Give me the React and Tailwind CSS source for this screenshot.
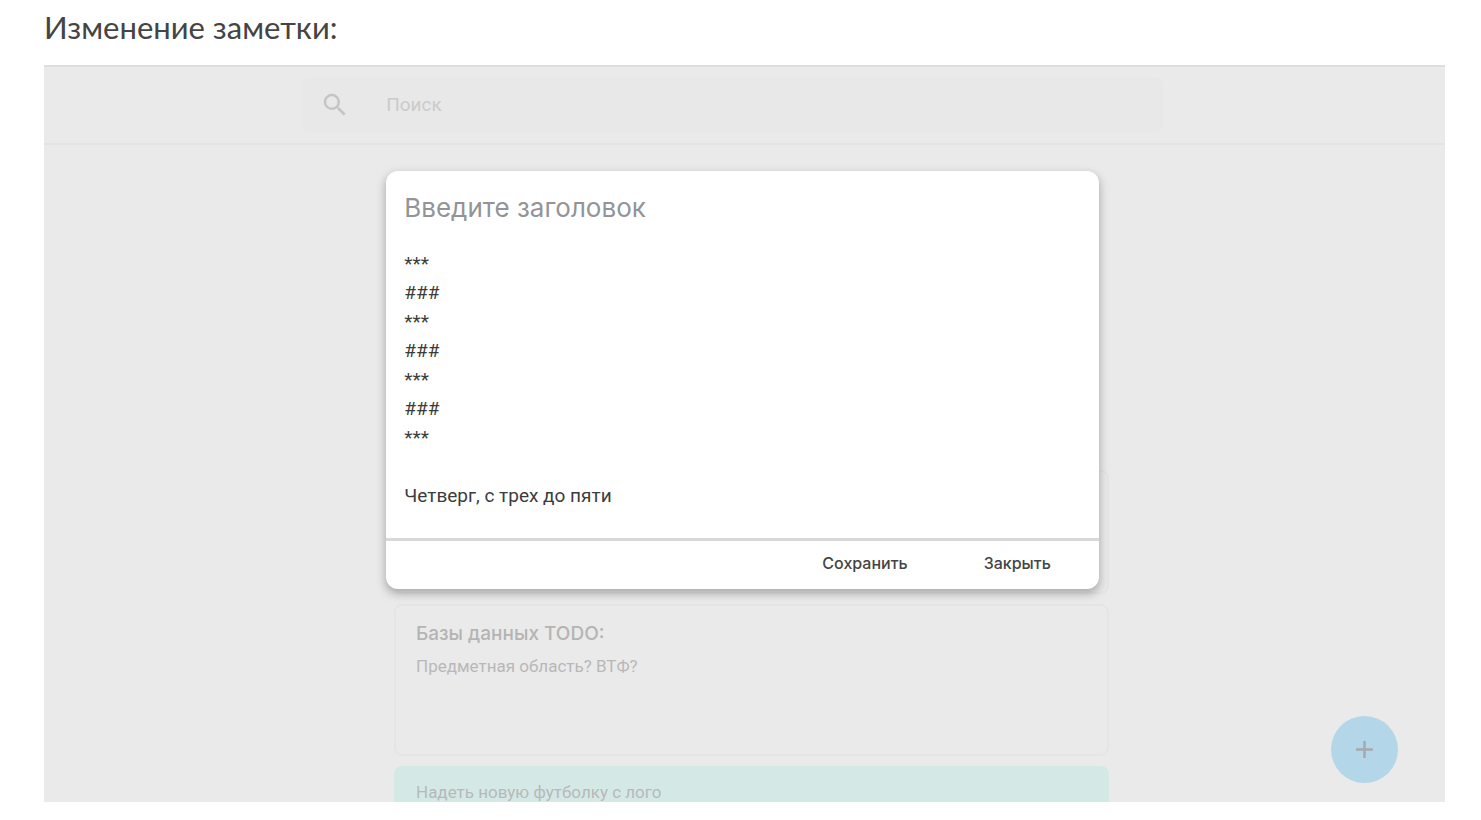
import React from "react";
import { MdSearch, MdAdd } from "react-icons/md";

const NOTE_TEXT = [
  "***",
  "###",
  "***",
  "###",
  "***",
  "###",
  "***",
  "",
  "Четверг, с трех до пяти",
].join("\n");

function Header() {
  return (
    <header className="flex justify-center border-t-2 border-b-2 border-t-[#dedede] border-b-[#e4e4e4] pt-2.5 pr-6 pb-2.5">
      <label className="flex h-14 w-5/8 items-center gap-9 rounded-lg bg-[#e8e8e8] pl-4.5 text-[#c4c4c4]">
        <MdSearch size={30} aria-hidden="true" />
        <input
          type="search"
          aria-label="Поиск"
          placeholder="Поиск"
          className="min-w-0 flex-1 bg-transparent text-[19px] outline-none placeholder:text-[#cbcbcb]"
        />
      </label>
    </header>
  );
}

function NoteCard({ title, text, className }) {
  return (
    <article className={`shrink-0 rounded-lg border-2 px-5 ${className}`}>
      {title && (
        <h2 className="mb-1 font-[Inter,sans-serif] text-[19px] leading-7 font-medium text-[#b4b4b4]">
          {title}
        </h2>
      )}
      {text && <p className="text-[17px] leading-7 text-[#b8b8b8]">{text}</p>}
    </article>
  );
}

function EditDialog() {
  return (
    <form
      role="dialog"
      aria-label="Изменение заметки"
      onSubmit={(e) => e.preventDefault()}
      className="flex w-[51%] flex-col overflow-hidden rounded-xl bg-white shadow-[0_4px_9px_1px_rgba(60,60,70,0.35)]"
    >
      <div className="flex flex-col px-[18px] pt-4 pb-7">
        <input
          type="text"
          aria-label="Заголовок"
          placeholder="Введите заголовок"
          className="h-10 font-[Inter,sans-serif] text-[26px] outline-none placeholder:text-[#929498]"
        />
        <textarea
          aria-label="Текст заметки"
          rows={9}
          defaultValue={NOTE_TEXT}
          className="mt-[22px] resize-none overflow-hidden text-[19px] leading-[29px] text-[#3c3c3c] outline-none"
        />
      </div>
      <div className="flex h-[51px] items-center justify-end gap-[76px] border-t-3 border-[#d8d8d8] pr-12 pb-1 font-[Inter,sans-serif] text-base font-medium text-[#444]">
        <button type="submit">Сохранить</button>
        <button type="button">Закрыть</button>
      </div>
    </form>
  );
}

export default function App() {
  return (
    <div className="flex h-screen flex-col bg-white pr-9 pb-[18px] pl-11 font-[Roboto,sans-serif]">
      <h1 className="pt-[7px] pb-[18px] font-[Lato,sans-serif] text-[31px] leading-10 text-[#444]">
        Изменение заметки:
      </h1>
      <section className="relative flex min-h-0 flex-1 flex-col overflow-hidden bg-[#eaeaea]">
        <Header />
        <main className="flex min-h-0 flex-1 justify-center overflow-hidden pt-[325px] pr-1.5 pl-5">
          <div className="flex w-[52%] flex-col gap-2.5">
            <NoteCard className="h-[124px] border-[#e5e5e5]" />
            <NoteCard
              className="h-[152px] border-[#e5e5e5] pt-3.5"
              title="Базы данных TODO:"
              text="Предметная область? ВТФ?"
            />
            <NoteCard
              className="h-[152px] border-[#d4e9e6] bg-[#d4e9e6] pt-2.5"
              text="Надеть новую футболку с лого"
            />
          </div>
        </main>
        <div className="absolute inset-0 flex items-start justify-center pt-[106px] pr-1">
          <EditDialog />
        </div>
        <button
          type="button"
          aria-label="Добавить заметку"
          className="absolute right-[47px] bottom-[19px] flex size-[67px] items-center justify-center rounded-full bg-[#b3d7e8] text-[#a3a9ac]"
        >
          <MdAdd size={29} aria-hidden="true" />
        </button>
      </section>
    </div>
  );
}
